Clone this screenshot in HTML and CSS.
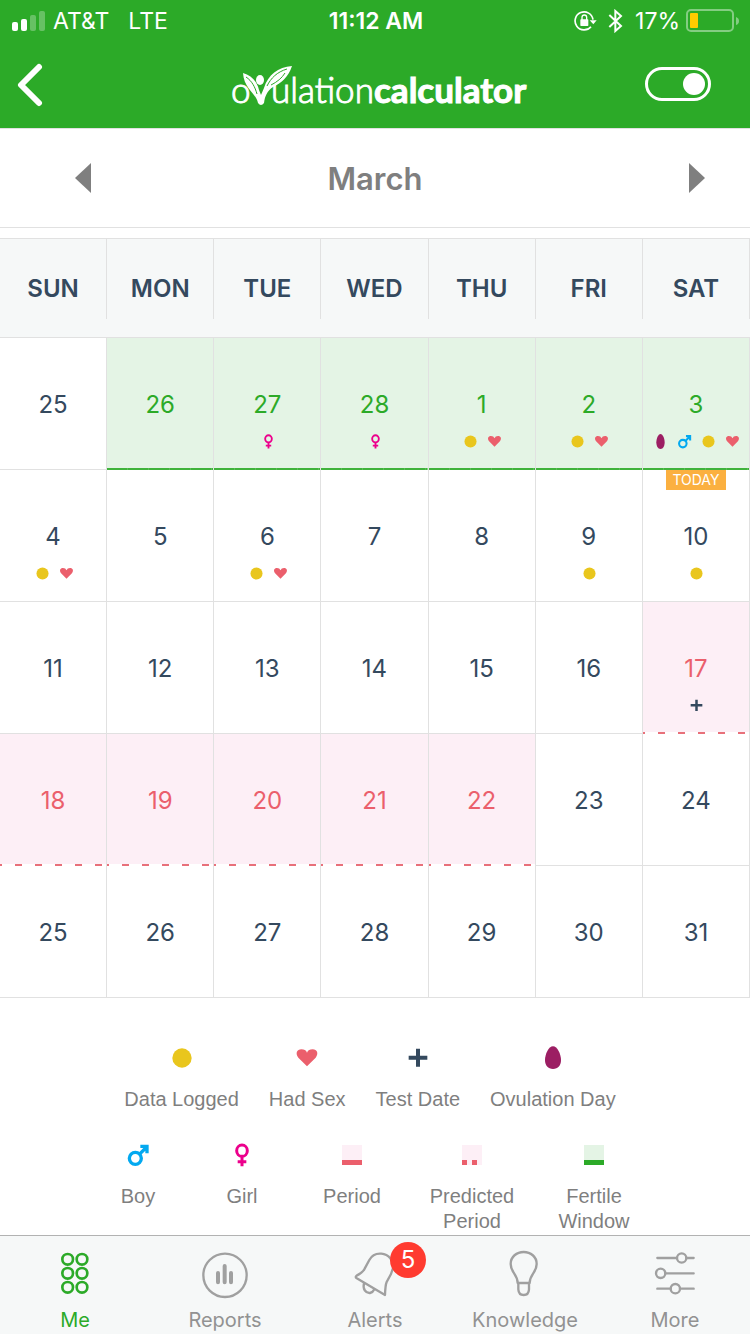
FILE: index.html
```html
<!DOCTYPE html>
<html lang="en">
<head>
<meta charset="utf-8">
<meta name="viewport" content="width=device-width, initial-scale=1">
<title>Ovulation Calculator</title>
<link rel="stylesheet" href="styles.css">
</head>
<body>
<svg class="sprite" aria-hidden="true">
  <symbol id="dot" viewBox="0 0 72 72"><circle cx="36" cy="36" r="29" fill="#e9c61d"/></symbol>
  <symbol id="heart" viewBox="0 0 72 72"><path d="M36 61L10 35C0 22 6 10 19 10Q32 10 36 20Q40 10 53 10C66 10 72 22 62 35Z" fill="#eb5f6c"/></symbol>
  <symbol id="plus" viewBox="0 0 72 72"><path d="M36 8V62M8 35H64" stroke="#34495e" stroke-width="12" fill="none"/></symbol>
  <symbol id="egg" viewBox="0 0 72 72"><path d="M36 1C49 1 60 25 60 42C60 58 51 69 36 69C21 69 12 58 12 42C12 25 23 1 36 1Z" fill="#9c1e63"/></symbol>
  <symbol id="egg-slim" viewBox="0 0 72 72"><path d="M36 0C47 0 56 22 56 40C56 58 49 72 36 72C23 72 16 58 16 40C16 22 25 0 36 0Z" fill="#9c1e63"/></symbol>
  <symbol id="boy" viewBox="0 0 72 72"><g fill="none" stroke="#03a9f0" stroke-width="10"><circle cx="28" cy="46" r="18"/><path d="M40 34L62 12M43 10H63V31"/></g></symbol>
  <symbol id="girl" viewBox="0 0 72 72"><g fill="none" stroke="#ec008c" stroke-width="9"><ellipse cx="36" cy="23" rx="16" ry="17"/><path d="M36 40V70M23 56H49"/></g></symbol>
</svg>

<header class="header">
  <div class="status">
    <div class="status-left">
      <svg class="signal" viewBox="0 0 33 20" aria-hidden="true"><g fill="#fff"><rect y="11" width="6" height="9" rx="2"/><rect x="9" y="8" width="6" height="12" rx="2"/><g opacity=".28"><rect x="18" y="4" width="6" height="16" rx="2"/><rect x="27" width="6" height="20" rx="2"/></g></g></svg>
      <span class="carrier">AT&amp;T</span>
      <span>LTE</span>
    </div>
    <time class="clock">11:12 AM</time>
    <div class="status-right">
      <svg class="lock" viewBox="0 0 72 66" aria-label="Rotation locked"><path d="M51 50A27 27 0 1 1 57 29" fill="none" stroke="#fff" stroke-width="5"/><path d="M47 31H68L58 43Z" fill="#fff"/><rect x="19" y="28" width="24" height="20" rx="2" fill="#fff"/><path d="M24 30V22a7 7 0 0 1 14 0V30" fill="none" stroke="#fff" stroke-width="4"/></svg>
      <svg class="bluetooth" viewBox="0 0 45 72" aria-label="Bluetooth"><path d="M4 18L39 51L22 66V6L39 21L4 54" fill="none" stroke="#fff" stroke-width="6"/></svg>
      <span>17%</span>
      <svg class="battery" viewBox="0 0 54 24" aria-hidden="true"><rect x="1" y="1" width="46" height="21" rx="4" fill="none" stroke="#fff" stroke-width="2" opacity=".42"/><rect x="4" y="4" width="8" height="15" rx="1" fill="#fc0"/><path d="M50 8Q53 9 53 12T50 16Z" fill="#fff" opacity=".42"/></svg>
    </div>
  </div>
  <div class="navbar">
    <button class="back" type="button" aria-label="Back"><svg viewBox="0 0 26 44"><path d="M22 4L4 22L22 40" fill="none" stroke="#fff" stroke-width="6" stroke-linecap="round" stroke-linejoin="round"/></svg></button>
    <svg class="logo" viewBox="0 0 300 50" role="img" aria-label="ovulationcalculator">
      <text class="logo-light" x="1" y="43">o</text>
      <text class="logo-light" x="41" y="43">ulation</text>
      <text class="logo-bold" x="144" y="43">calculator</text>
      <path d="M13 13C21 15 27 21 29 30L31 35L34 28C38 15 48 7 62 6C58 18 51 23 43 27C37 31 35 36 34 43Q31 47 28 43C26 33 14 29 13 13Z" fill="#fff"/>
      <path d="M16 17C22 21 25 27 27 34M57 9C47 12 41 18 37 26M55 13C52 18 47 22 41 25" fill="none" stroke="#2caa28"/>
      <ellipse cx="30" cy="20" rx="4" ry="5" fill="#fff"/>
    </svg>
    <input class="toggle" type="checkbox" role="switch" checked aria-label="Calendar view">
  </div>
</header>

<main>
  <div class="month">
    <button class="prev" type="button" aria-label="Previous month"><svg viewBox="0 0 16 30"><path d="M16 0V30L0 15Z" fill="#7f7f7f"/></svg></button>
    <h1>March</h1>
    <button class="next" type="button" aria-label="Next month"><svg viewBox="0 0 16 30"><path d="M0 0V30L16 15Z" fill="#7f7f7f"/></svg></button>
  </div>

  <table class="calendar">
    <thead>
      <tr><th scope="col"><div>SUN</div></th><th scope="col"><div>MON</div></th><th scope="col"><div>TUE</div></th><th scope="col"><div>WED</div></th><th scope="col"><div>THU</div></th><th scope="col"><div>FRI</div></th><th scope="col"><div>SAT</div></th></tr>
    </thead>
    <tbody>
      <tr>
        <td>25</td>
        <td class="fertile">26</td>
        <td class="fertile">27<div class="marks"><svg><use href="#girl"/></svg></div></td>
        <td class="fertile">28<div class="marks"><svg><use href="#girl"/></svg></div></td>
        <td class="fertile">1<div class="marks"><svg><use href="#dot"/></svg><svg><use href="#heart"/></svg></div></td>
        <td class="fertile">2<div class="marks"><svg><use href="#dot"/></svg><svg><use href="#heart"/></svg></div></td>
        <td class="fertile">3<div class="marks"><svg><use href="#egg-slim"/></svg><svg><use href="#boy"/></svg><svg><use href="#dot"/></svg><svg><use href="#heart"/></svg></div></td>
      </tr>
      <tr>
        <td>4<div class="marks"><svg><use href="#dot"/></svg><svg><use href="#heart"/></svg></div></td>
        <td>5</td>
        <td>6<div class="marks"><svg><use href="#dot"/></svg><svg><use href="#heart"/></svg></div></td>
        <td>7</td>
        <td>8</td>
        <td>9<div class="marks"><svg><use href="#dot"/></svg></div></td>
        <td class="today"><span class="today-tag">TODAY</span>10<div class="marks"><svg><use href="#dot"/></svg></div></td>
      </tr>
      <tr>
        <td>11</td><td>12</td><td>13</td><td>14</td><td>15</td><td>16</td>
        <td class="predicted">17<div class="marks"><svg><use href="#plus"/></svg></div></td>
      </tr>
      <tr>
        <td class="predicted">18</td><td class="predicted">19</td><td class="predicted">20</td><td class="predicted">21</td><td class="predicted">22</td><td>23</td><td>24</td>
      </tr>
      <tr>
        <td>25</td><td>26</td><td>27</td><td>28</td><td>29</td><td>30</td><td>31</td>
      </tr>
    </tbody>
  </table>

  <section class="legend" aria-label="Legend">
    <ul class="legend-row">
      <li><svg><use href="#dot"/></svg>Data Logged</li>
      <li><svg><use href="#heart"/></svg>Had Sex</li>
      <li><svg><use href="#plus"/></svg>Test Date</li>
      <li><svg><use href="#egg"/></svg>Ovulation Day</li>
    </ul>
    <ul class="legend-grid">
      <li><svg><use href="#boy"/></svg>Boy</li>
      <li><svg><use href="#girl"/></svg>Girl</li>
      <li><span class="swatch swatch-period"></span>Period</li>
      <li><span class="swatch swatch-predicted"></span>Predicted<br>Period</li>
      <li><span class="swatch swatch-fertile"></span>Fertile<br>Window</li>
    </ul>
  </section>
</main>

<nav class="tabs">
  <a class="active" href="#me" aria-current="page">
    <svg viewBox="150 60 150 150"><circle cx="203" cy="88" r="16"/><circle cx="246" cy="88" r="16"/><circle cx="203" cy="130" r="16"/><circle cx="246" cy="130" r="16"/><circle cx="203" cy="172" r="16"/><circle cx="246" cy="172" r="16"/></svg>
    Me
  </a>
  <a href="#reports">
    <svg viewBox="600 60 150 150"><circle cx="675" cy="136" r="65"/><path d="M654 129V157M674 108V157M693 129V157" stroke-width="12"/></svg>
    Reports
  </a>
  <a href="#alerts">
    <svg viewBox="90 60 150 150"><path d="M195 195L109 144Q105 141 110 137Q128 128 134 116L148 90C157 73 172 70 184 71C206 73 222 92 219 114L213 132L200 156Q196 165 195 195Z"/><path d="M132 160C127 178 138 190 150 189Q159 187 163 178"/></svg>
    Alerts
    <span class="count">5</span>
  </a>
  <a href="#knowledge">
    <svg viewBox="540 60 150 150"><path d="M593 159C593 132 572 128 572 102C572 80 590 66 611 66C632 66 650 80 650 102C650 128 629 132 629 159Z"/><path d="M595 160V178Q596 195 611 195T627 178V160"/></svg>
    Knowledge
  </a>
  <a href="#more">
    <svg viewBox="990 60 150 150"><path d="M1012 84H1071M1099 84H1121M1036 130H1121M1012 176H1052M1080 176H1121"/><circle cx="1085" cy="84" r="14"/><circle cx="1022" cy="130" r="14"/><circle cx="1066" cy="176" r="14"/></svg>
    More
  </a>
</nav>
</body>
</html>
```

FILE: styles.css
```css
* { box-sizing: border-box; }

body {
  margin: 0;
  min-height: 100vh;
  display: flex;
  flex-direction: column;
  background: #fff;
  color: #34495e;
  font-family: Inter, Roboto, sans-serif;
}

button { border: 0; background: none; padding: 0; cursor: pointer; }
svg { display: block; }
.sprite { position: absolute; width: 0; height: 0; }

/* Status bar and navigation */
.header {
  background: #2caa28;
  color: #fff;
  border-bottom: 1px solid #e1e1e1;
}
.status {
  display: grid;
  grid-template-columns: 1fr auto 1fr;
  align-items: center;
  height: 41px;
  padding: 0 10px 0 12px;
  font-size: 23px;
}
.status-left, .status-right { display: flex; align-items: center; }
.status-right { justify-content: flex-end; }
.signal { width: 33px; height: 20px; margin-right: 8px; }
.carrier { margin-right: 19px; }
.clock { font-weight: 600; }
.lock { width: 24px; height: 22px; margin-right: 10px; }
.bluetooth { width: 15px; height: 24px; margin-right: 12px; }
.battery { width: 54px; height: 24px; margin-left: 6px; }
.navbar {
  display: flex;
  align-items: center;
  justify-content: space-between;
  height: 87px;
  padding: 0 39px 0 17px;
}
.back svg { width: 26px; height: 44px; }
.logo { width: 300px; height: 50px; margin-left: 72px; fill: #fff; }
.logo-light {
  font: 300 35px Lato, sans-serif;
  stroke: #fff;
  stroke-width: 1px;
}
.logo-bold {
  font: 700 35px Lato, sans-serif;
  stroke: #fff;
  stroke-width: 1px;
}
.toggle {
  appearance: none;
  width: 66px;
  height: 34px;
  margin: 0 0 2px;
  padding: 3px;
  border: 3px solid #fff;
  border-radius: 17px;
  display: flex;
}
.toggle::before {
  content: "";
  width: 22px;
  height: 22px;
  border-radius: 50%;
  background: #fff;
}
.toggle:checked { justify-content: flex-end; }

/* Month picker */
.month {
  display: grid;
  grid-template-columns: 1fr auto 1fr;
  align-items: center;
  height: 99px;
  padding: 0 45px;
  border-bottom: 1px solid #e1e1e1;
}
.prev { justify-self: start; padding: 10px 0 10px 30px; }
.next { justify-self: end; padding: 10px 0 10px 30px; }
.month svg { width: 16px; height: 30px; }
.month h1 { margin: 0; font-size: 31px; font-weight: 600; color: #7f7f7f; }

/* Calendar */
.calendar {
  width: 100%;
  margin-top: 10px;
  border-top: 1px solid #e1e1e1;
  border-collapse: separate;
  border-spacing: 0;
  table-layout: fixed;
}
th {
  padding: 0 0 18px;
  background: #f6f8f8;
  border-bottom: 1px solid #e1e1e1;
  font-size: 24px;
  font-weight: 600;
}
th div {
  height: 80px;
  padding-top: 20px;
  line-height: 60px;
  border-right: 1px solid #e1e1e1;
}
td {
  height: 132px;
  padding: 51px 0 0;
  border-right: 1px solid #e1e1e1;
  border-bottom: 1px solid #e1e1e1;
  font-size: 24px;
  line-height: 32px;
  text-align: center;
  vertical-align: top;
}
.fertile {
  color: #2caa28;
  border-bottom: 0;
  background: repeating-linear-gradient(90deg, #3fb23b 0 20px, #5abd56 20px 21px) bottom / 100% 2px no-repeat #e4f4e5;
}
.predicted {
  color: #eb5f6c;
  border-bottom: 0;
  background:
    repeating-linear-gradient(90deg, #e8707a 0 2px, #fff 2px 15px, #e8707a 15px 20px) bottom / 100% 2px no-repeat #fdeff6;
}
.marks {
  display: flex;
  justify-content: center;
  gap: 9px;
  padding: 13px 0 0 2px;
}
.marks svg { width: 15px; height: 15px; }
.today { position: relative; }
.today-tag {
  position: absolute;
  top: 0;
  left: 50%;
  width: 60px;
  margin-left: -30px;
  background: #fbb040;
  color: #fff;
  font-size: 14px;
  line-height: 20px;
}

/* Legend */
.legend {
  padding: 48px 10px 0 0;
  color: #7f7f7f;
  font-family: "Liberation Sans", Arial, sans-serif;
  font-size: 20px;
  line-height: 25px;
}
.legend ul { margin: 0; padding: 0; list-style: none; justify-content: center; }
.legend-row { display: flex; gap: 30px; }
.legend .legend-grid {
  display: grid;
  grid-template-columns: 96px 112px 108px 132px 112px;
  margin-top: 31px;
}
.legend li {
  display: flex;
  flex-direction: column;
  align-items: center;
  text-align: center;
}
.legend svg { width: 24px; height: 24px; margin-bottom: 17px; }
.swatch { width: 20px; height: 20px; margin: 2px 0 19px; }
.swatch-period { background: linear-gradient(#eb5f6c, #eb5f6c) bottom / 100% 5px no-repeat #fdeff6; }
.swatch-predicted { background: repeating-linear-gradient(90deg, #eb5f6c 0 5px, #fdeff6 5px 10px) bottom / 100% 5px no-repeat #fdeff6; }
.swatch-fertile { background: linear-gradient(#2caa28, #2caa28) bottom / 100% 5px no-repeat #e4f4e5; }

/* Tab bar */
.tabs {
  display: grid;
  grid-template-columns: repeat(5, 1fr);
  margin-top: auto;
  padding: 14px 0 2px;
  border-top: 1px solid #b2b2b2;
  background: #f6f8f8;
}
.tabs a {
  position: relative;
  display: flex;
  flex-direction: column;
  align-items: center;
  color: #929292;
  font-size: 20px;
  line-height: 24px;
  text-decoration: none;
}
.tabs a.active { color: #2caa28; }
.tabs svg {
  width: 50px;
  height: 50px;
  margin-bottom: 8px;
  fill: none;
  stroke: #a0a0a0;
  stroke-width: 7;
  stroke-linecap: round;
  stroke-linejoin: round;
}
.tabs .active svg { stroke: #2caa28; stroke-width: 8; }
.count {
  position: absolute;
  top: -8px;
  left: 50%;
  width: 36px;
  height: 36px;
  margin-left: 15px;
  border-radius: 50%;
  background: #ff3b30;
  color: #fff;
  font-size: 24px;
  line-height: 36px;
  text-align: center;
}
```
